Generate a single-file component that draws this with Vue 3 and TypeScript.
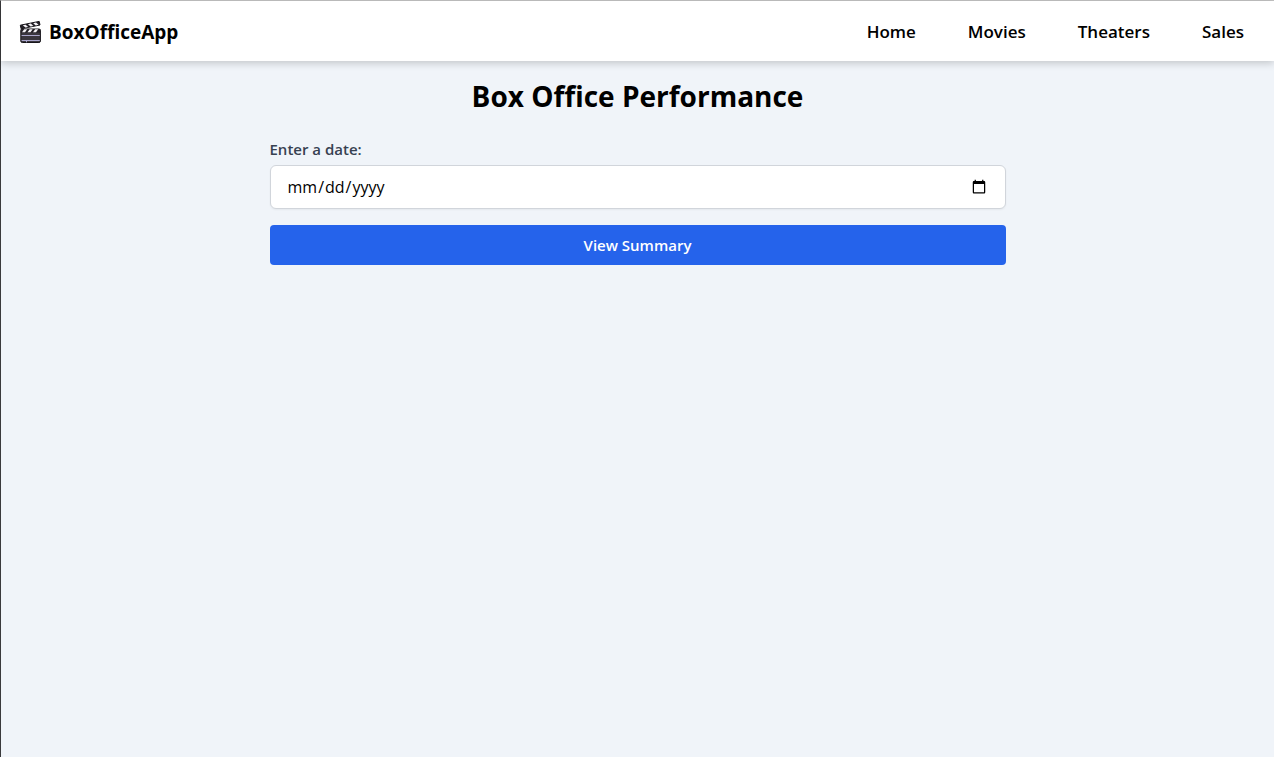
<script setup lang="ts">
import { ref } from 'vue'

interface NavLink {
  label: string
  href: string
}

const links: NavLink[] = [
  { label: 'Home', href: '#home' },
  { label: 'Movies', href: '#movies' },
  { label: 'Theaters', href: '#theaters' },
  { label: 'Sales', href: '#sales' },
]

const date = ref('')
</script>

<template>
  <div class="page">
    <header class="navbar">
      <a class="brand" href="#home">
        <svg class="brand-icon" viewBox="0 0 24 24" aria-hidden="true">
          <rect x="1.8" y="9" width="19.6" height="13.5" rx="1.5" fill="#3a363e" stroke="#17151a" />
          <path d="M1.3 5.2 20.2 1.4 21 5 2.1 8.8Z" fill="#242127" stroke="#17151a" stroke-linejoin="round" />
          <path d="M3.8 5.3 6.6 4.7 9.2 6.9 6.4 7.5ZM9 4.2 11.8 3.6 14.4 5.9 11.6 6.5ZM14.2 3.2 17 2.6 19.6 4.8 16.8 5.4Z" fill="#f4f2f6" />
          <path d="M1.8 9H21.4V12.6H1.8Z" fill="#242127" />
          <path d="M5.2 9.2H8.2L6 12.3H3ZM10.7 9.2H13.7L11.5 12.3H8.5ZM16.2 9.2H19.2L17 12.3H14Z" fill="#f4f2f6" />
          <path d="M2.6 15.5H20.8M2.6 20.5H20.8M7.5 20.5V22.3" fill="none" stroke="#a9a5cb" stroke-width="1" />
        </svg>
        <span>BoxOfficeApp</span>
      </a>
      <nav class="links">
        <a v-for="link in links" :key="link.label" :href="link.href">{{ link.label }}</a>
      </nav>
    </header>

    <main class="content">
      <h1>Box Office Performance</h1>
      <form @submit.prevent>
        <label for="date">Enter a date:</label>
        <input id="date" v-model="date" type="date" />
        <button type="submit">View Summary</button>
      </form>
    </main>
  </div>
</template>

<style>
body {
  background: #f0f4f9;
}
</style>

<style scoped>
.page {
  box-sizing: border-box;
  min-height: 100vh;
  border-top: 1px solid #c4c4c4;
  border-left: 1px solid #3a3a3c;
  background: #f0f4f9;
  color: #000;
  font-family: "Segoe UI", "Open Sans", "Noto Sans", sans-serif;
}

.navbar {
  display: flex;
  align-items: center;
  justify-content: space-between;
  padding: 17px 30px 15px 18px;
  background: #fff;
  box-shadow: 0 2px 8px rgba(0, 0, 0, 0.2);
}

.brand {
  display: flex;
  align-items: center;
  gap: 6px;
  color: #000;
  font-size: 19px;
  font-weight: 700;
  line-height: 28px;
  text-decoration: none;
}

.brand-icon {
  width: 24px;
  height: 24px;
}

.links {
  display: flex;
  gap: 52px;
}

.links a {
  color: #000;
  font-size: 17px;
  font-weight: 600;
  line-height: 24px;
  text-decoration: none;
}

.content {
  box-sizing: border-box;
  max-width: 768px;
  margin: 0 auto;
  padding: 16px;
}

h1 {
  margin: 0 0 22px;
  font-size: 28px;
  font-weight: 700;
  line-height: 38px;
  text-align: center;
}

form {
  display: flex;
  flex-direction: column;
}

label {
  margin-bottom: 4px;
  color: #374151;
  font-size: 15px;
  font-weight: 600;
  line-height: 24px;
}

input {
  box-sizing: border-box;
  height: 44px;
  margin-bottom: 16px;
  padding: 8px 16px;
  border: 1px solid #d1d5db;
  border-radius: 6px;
  background: #fff;
  box-shadow: 0 1px 2px rgba(0, 0, 0, 0.05);
  color: #000;
  font: inherit;
  font-size: 16px;
}

button {
  height: 40px;
  padding: 0 16px;
  border: 0;
  border-radius: 4px;
  background: #2563eb;
  color: #fff;
  font: inherit;
  font-size: 15px;
  font-weight: 600;
  cursor: pointer;
}
</style>
